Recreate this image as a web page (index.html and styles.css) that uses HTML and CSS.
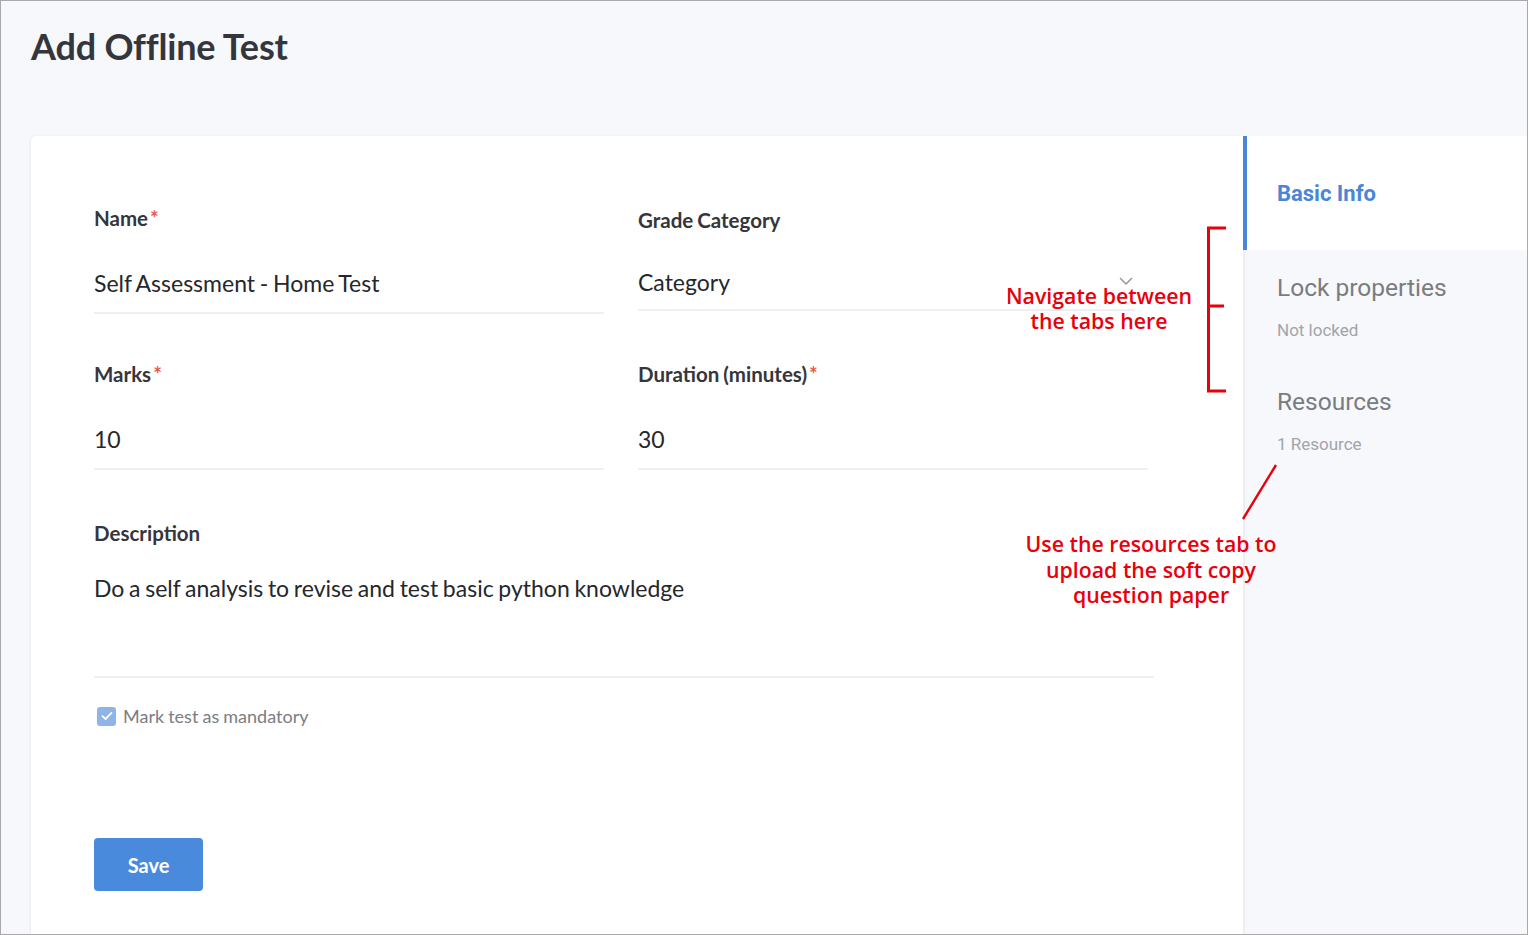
FILE: index.html
```html
<!DOCTYPE html>
<html lang="en">
<head>
<meta charset="utf-8">
<title>Add Offline Test</title>
<link rel="stylesheet" href="styles.css">
</head>
<body>
<div class="frame">
  <header class="page-head">
    <h1 class="page-title">Add Offline Test</h1>
  </header>
  <div class="main">
    <section class="card">
      <div class="grid">
        <div class="field">
          <div class="label">Name<span class="req">*</span></div>
          <div class="value">Self Assessment - Home Test</div>
        </div>
        <div class="field field-select">
          <div class="label">Grade Category</div>
          <div class="value value-select">
            <span>Category</span>
            <svg class="chev" width="14" height="9" viewBox="0 0 14 9"><path d="M1.5 1.5 L7 7 L12.5 1.5" fill="none" stroke="#9a9a9a" stroke-width="1.6" stroke-linecap="round" stroke-linejoin="round"/></svg>
          </div>
        </div>
        <div class="field">
          <div class="label">Marks<span class="req">*</span></div>
          <div class="value">10</div>
        </div>
        <div class="field">
          <div class="label">Duration (minutes)<span class="req">*</span></div>
          <div class="value">30</div>
        </div>
      </div>
      <div class="field field-desc">
        <div class="label">Description</div>
        <div class="value value-desc">Do a self analysis to revise and test basic python knowledge</div>
      </div>
      <label class="check-row">
        <span class="check-box">
          <svg width="12" height="10" viewBox="0 0 12 10"><path d="M1.5 5.2 L4.5 8 L10.5 1.8" fill="none" stroke="#fff" stroke-width="1.8" stroke-linecap="round" stroke-linejoin="round"/></svg>
        </span>
        <span class="check-label">Mark test as mandatory</span>
      </label>
      <button class="save-btn">Save</button>
    </section>
    <aside class="tabs">
      <div class="tab tab-active">
        <div class="tab-title">Basic Info</div>
      </div>
      <div class="tab">
        <div class="tab-title">Lock properties</div>
        <div class="tab-sub">Not locked</div>
      </div>
      <div class="tab">
        <div class="tab-title">Resources</div>
        <div class="tab-sub">1 Resource</div>
      </div>
    </aside>
  </div>

  <div class="note note-nav">Navigate between<br>the tabs here</div>
  <svg class="bracket" width="26" height="170" viewBox="0 0 26 170">
    <path d="M21 2 H3.5 V165 H21 M3.5 80 H19" fill="none" stroke="#e8000b" stroke-width="3"/>
  </svg>
  <svg class="slash" width="40" height="60" viewBox="0 0 40 60">
    <path d="M36 2 L3 56" fill="none" stroke="#e8000b" stroke-width="2.4"/>
  </svg>
  <div class="note note-res">Use the resources tab to<br>upload the soft copy<br>question paper</div>
</div>
</body>
</html>
```

FILE: styles.css
```css
* { box-sizing: border-box; }

html, body {
  margin: 0;
  padding: 0;
  background: #ffffff;
}

.frame {
  position: relative;
  width: 1528px;
  height: 935px;
  border: 1px solid #a9a9a9;
  background: #f7f8fc;
  overflow: hidden;
  display: flex;
  flex-direction: column;
  font-family: Lato, "Open Sans", sans-serif;
}

.page-head {
  height: 135px;
  padding: 23px 0 0 30px;
  flex: none;
}

.page-title {
  margin: 0;
  font-size: 36px;
  line-height: 44px;
  font-weight: 700;
  color: #34363b;
  letter-spacing: -0.2px;
}

.main {
  flex: 1;
  display: flex;
  min-height: 0;
}

.card {
  flex: 1;
  margin-left: 30px;
  background: #ffffff;
  border-top-left-radius: 5px;
  box-shadow: -1px 0 3px rgba(0, 0, 0, 0.05);
  padding: 70px 63px 0 63px;
}

.grid {
  display: grid;
  grid-template-columns: 510px 510px;
  column-gap: 34px;
  row-gap: 48px;
}

.field {
  display: flex;
  flex-direction: column;
}

.label {
  font-size: 20.5px;
  line-height: 24px;
  font-weight: 700;
  color: #34363b;
  word-spacing: -1px;
}

.req {
  color: #e55a4f;
  margin-left: 2px;
  font-weight: 700;
}

.value {
  margin-top: 38px;
  font-size: 23px;
  line-height: 30px;
  word-spacing: -1.2px;
  color: #25272b;
  padding-bottom: 14px;
  border-bottom: 2px solid #eeeff1;
}

.field-select .label {
  margin-top: 2px;
}

.value-select {
  margin-top: 35px;
  padding-bottom: 12px;
  width: 497px;
  display: flex;
  justify-content: space-between;
  align-items: center;
}

.chev {
  margin-right: 2px;
  margin-top: -2px;
}

.field-desc {
  margin-top: 51px;
  width: 1060px;
}

.value-desc {
  margin-top: 28px;
  height: 105px;
  padding-bottom: 0;
}

.check-row {
  display: flex;
  align-items: center;
  gap: 7px;
  margin-top: 28px;
  margin-left: 3px;
  height: 20px;
}

.check-box {
  width: 19px;
  height: 19px;
  border-radius: 3px;
  background: #8fb4ea;
  display: flex;
  align-items: center;
  justify-content: center;
}

.check-label {
  font-size: 18px;
  line-height: 20px;
  word-spacing: -0.5px;
  color: #7b7d82;
}

.save-btn {
  display: block;
  margin-top: 112px;
  width: 109px;
  height: 53px;
  border: none;
  border-radius: 4px;
  background: #4a8add;
  color: #ffffff;
  font-family: Lato, sans-serif;
  font-size: 20px;
  font-weight: 700;
  padding: 0;
}

.tabs {
  width: 284px;
  flex: none;
  background: #f7f8fc;
  border-left: 2px solid #eceef3;
  display: flex;
  flex-direction: column;
}

.tab {
  height: 114px;
  padding: 23px 0 0 34px;
  margin-left: -2px;
  font-family: Roboto, "Open Sans", sans-serif;
}

.tab-active {
  background: #ffffff;
  border-left: 4px solid #4a85d8;
  padding: 43px 0 0 30px;
}

.tab-title {
  font-size: 24.5px;
  line-height: 30px;
  color: #7a7c80;
}

.tab-active .tab-title {
  font-size: 22px;
  color: #4a85d8;
  font-weight: 700;
}

.tab-sub {
  margin-top: 17px;
  font-size: 17px;
  line-height: 20px;
  color: #a2a4a8;
}

.note {
  position: absolute;
  font-family: "Open Sans", sans-serif;
  font-weight: 600;
  color: #e8000b;
  font-size: 21.3px;
  text-align: center;
}

.note-nav {
  left: 978px;
  top: 282px;
  width: 240px;
  line-height: 25px;
}

.note-res {
  left: 1000px;
  top: 530px;
  width: 300px;
  line-height: 25.5px;
}

.bracket {
  position: absolute;
  left: 1204px;
  top: 225px;
}

.slash {
  position: absolute;
  left: 1239px;
  top: 462px;
}
```
